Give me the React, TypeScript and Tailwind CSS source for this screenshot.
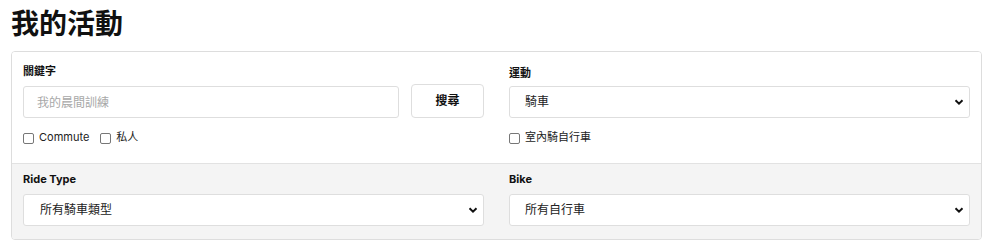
import { FunctionComponent, ReactNode } from "react";

const font = {
  fontFamily: '"Inter", "Noto Sans CJK TC", "Noto Sans", sans-serif',
};

const Chevron = () => (
  <svg
    className="pointer-events-none absolute right-[6px] top-1/2 h-[8px] w-[10px] -translate-y-1/2"
    viewBox="0 0 10 8"
    fill="none"
  >
    <path d="M1.5 2.2 5 5.6 8.5 2.2" stroke="#111" strokeWidth="2" />
  </svg>
);

const Field: FunctionComponent<{ label: string; children: ReactNode }> = ({
  label,
  children,
}) => (
  <div className="flex flex-col">
    <label className="mb-[7px] text-[11px] font-bold leading-[15px] text-[#111]">
      {label}
    </label>
    {children}
  </div>
);

const Select: FunctionComponent<{ value: string; pl: string }> = ({
  value,
  pl,
}) => (
  <div className="relative">
    <select
      className={`h-[32px] w-full appearance-none rounded-[3px] border border-[#dedede] bg-white ${pl} pr-8 text-[12px] text-[#222] outline-none`}
      defaultValue={value}
    >
      <option>{value}</option>
    </select>
    <Chevron />
  </div>
);

const Check: FunctionComponent<{ label: string }> = ({ label }) => (
  <label className="flex items-center gap-[5px] text-[11px] text-[#222]">
    <input
      type="checkbox"
      className="mt-[2px] h-[11px] w-[11px] appearance-none rounded-[2px] border border-[#777] bg-white"
    />
    {label}
  </label>
);

const App: FunctionComponent = () => {
  return (
    <div className="min-h-[248px] bg-white pl-[11px] pr-[9px] pt-[6px]" style={font}>
      <h1 className="mb-[9px] text-[28px] font-bold leading-[36px] text-[#111]">
        我的活動
      </h1>

      <div className="overflow-hidden rounded-[4px] border border-[#dddddd]">
        <div className="grid grid-cols-2 gap-x-[25px] bg-white px-[11px] pb-[17px] pt-[12px]">
          <div className="flex flex-col">
            <label className="text-[11px] font-bold leading-[15px] text-[#111]">
              關鍵字
            </label>
            <div className="mt-[5px] flex items-end gap-[12px]">
              <input
                className="h-[32px] flex-1 rounded-[3px] border border-[#dedede] px-[13px] text-[12px] text-[#222] outline-none placeholder:text-[#a8a8a8]"
                placeholder="我的晨間訓練"
              />
              <button className="h-[34px] w-[73px] rounded-[4px] border border-[#dedede] bg-white text-[12px] font-bold text-[#111]">
                搜尋
              </button>
            </div>
            <div className="mt-[10px] flex h-[18px] items-center gap-[11px]">
              <Check label="Commute" />
              <Check label="私人" />
            </div>
          </div>

          <div className="flex flex-col">
            <label className="mt-[2px] mb-[5px] text-[11px] font-bold leading-[15px] text-[#111]">
              運動
            </label>
            <Select value="騎車" pl="pl-[15px]" />
            <div className="mt-[10px] flex h-[18px] items-center">
              <Check label="室內騎自行車" />
            </div>
          </div>
        </div>

        <div className="grid grid-cols-2 gap-x-[25px] border-t border-[#e2e2e2] bg-[#f4f4f4] px-[11px] pb-[13px] pt-[8px]">
          <Field label="Ride Type">
            <Select value="所有騎車類型" pl="pl-[16px]" />
          </Field>
          <Field label="Bike">
            <Select value="所有自行車" pl="pl-[15px]" />
          </Field>
        </div>
      </div>
    </div>
  );
};

export default App;
